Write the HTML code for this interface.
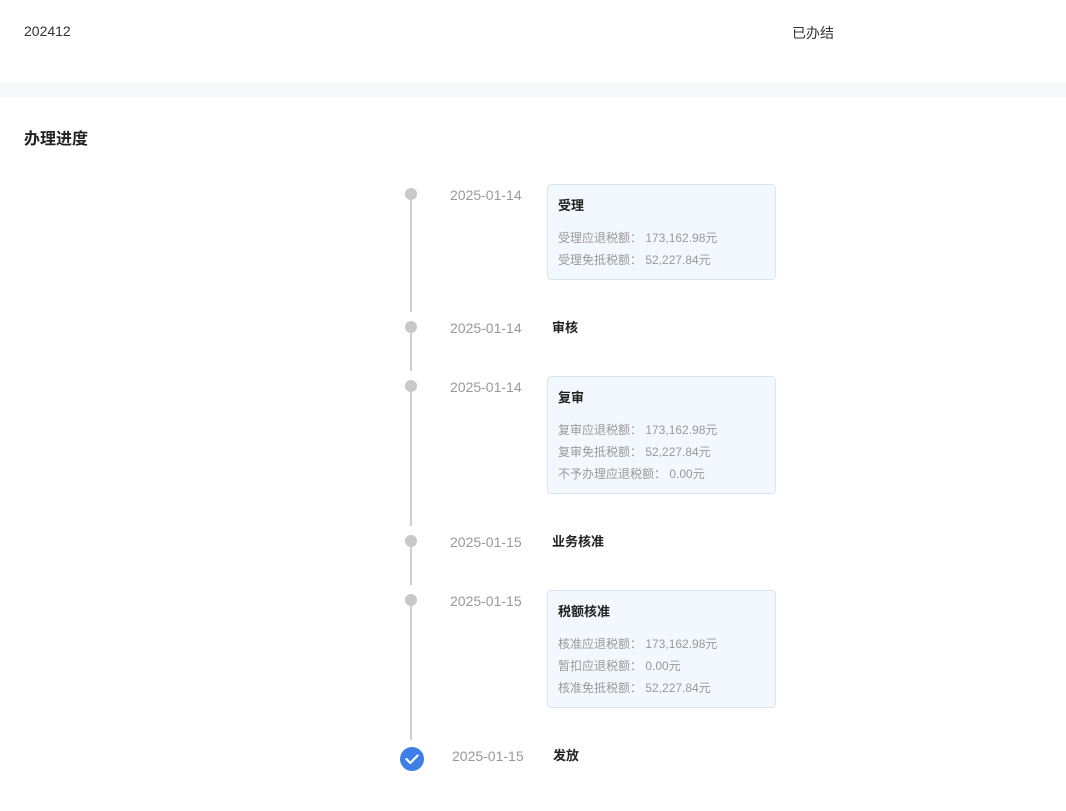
<!DOCTYPE html>
<html><head><meta charset="utf-8"><style>
*{margin:0;padding:0;box-sizing:border-box}
body{width:1066px;height:811px;background:#fff;position:relative;overflow:hidden;font-family:"Liberation Sans","Noto Sans CJK SC",sans-serif;color:#222}
.a{position:absolute;white-space:nowrap}
.band{position:absolute;left:0;top:83px;width:1066px;height:14px;background:#f7f8fa}
.dot{position:absolute;left:405px;width:12px;height:12px;border-radius:50%;background:#c8c8c8}
.line{position:absolute;left:410px;width:2px;background:#cfcfcf}
.date{position:absolute;left:450px;font-size:14px;color:#999;line-height:16px}
.card{position:absolute;left:547px;width:229px;background:#f3f8fe;border:1px solid #d8e6f3;border-radius:4px}
.t{position:absolute;font-size:13px;font-weight:bold;color:#222;line-height:16px}
.r{position:absolute;left:10px;font-size:12px;color:#999;line-height:14px}
</style></head><body>
<div class="a" style="left:24px;top:23px;font-size:14px;color:#333">202412</div>
<div class="a" style="left:792px;top:23px;font-size:14px;color:#333">已办结</div>
<div class="band"></div>
<div class="a" style="left:24px;top:125px;font-size:16px;font-weight:bold;color:#222">办理进度</div>

<div class="line" style="top:200px;height:112px"></div>
<div class="line" style="top:333px;height:38px"></div>
<div class="line" style="top:392px;height:134px"></div>
<div class="line" style="top:547px;height:38px"></div>
<div class="line" style="top:606px;height:134px"></div>

<div class="dot" style="top:188px"></div>
<div class="dot" style="top:321px"></div>
<div class="dot" style="top:380px"></div>
<div class="dot" style="top:535px"></div>
<div class="dot" style="top:594px"></div>
<div style="position:absolute;left:400px;top:747px;width:24px;height:24px;border-radius:50%;background:#3d7fe6">
<svg width="24" height="24" viewBox="0 0 24 24"><path d="M6.5 12.2l3.8 3.8 7.2-7.4" fill="none" stroke="#fff" stroke-width="2.2" stroke-linecap="round" stroke-linejoin="round"/></svg></div>

<div class="date" style="top:187px">2025-01-14</div>
<div class="date" style="top:320px">2025-01-14</div>
<div class="date" style="top:379px">2025-01-14</div>
<div class="date" style="top:534px">2025-01-15</div>
<div class="date" style="top:593px">2025-01-15</div>
<div class="date" style="top:748px;left:452px">2025-01-15</div>

<div class="card" style="top:184px;height:96px">
<div class="t" style="left:10px;top:13px">受理</div>
<div class="r" style="top:46px">受理应退税额： 173,162.98元</div>
<div class="r" style="top:68px">受理免抵税额： 52,227.84元</div>
</div>
<div class="t" style="left:552px;top:320px">审核</div>

<div class="card" style="top:376px;height:118px">
<div class="t" style="left:10px;top:13px">复审</div>
<div class="r" style="top:46px">复审应退税额： 173,162.98元</div>
<div class="r" style="top:68px">复审免抵税额： 52,227.84元</div>
<div class="r" style="top:90px">不予办理应退税额： 0.00元</div>
</div>
<div class="t" style="left:552px;top:534px">业务核准</div>

<div class="card" style="top:590px;height:118px">
<div class="t" style="left:10px;top:13px">税额核准</div>
<div class="r" style="top:46px">核准应退税额： 173,162.98元</div>
<div class="r" style="top:68px">暂扣应退税额： 0.00元</div>
<div class="r" style="top:90px">核准免抵税额： 52,227.84元</div>
</div>
<div class="t" style="left:553px;top:748px">发放</div>
</body></html>
